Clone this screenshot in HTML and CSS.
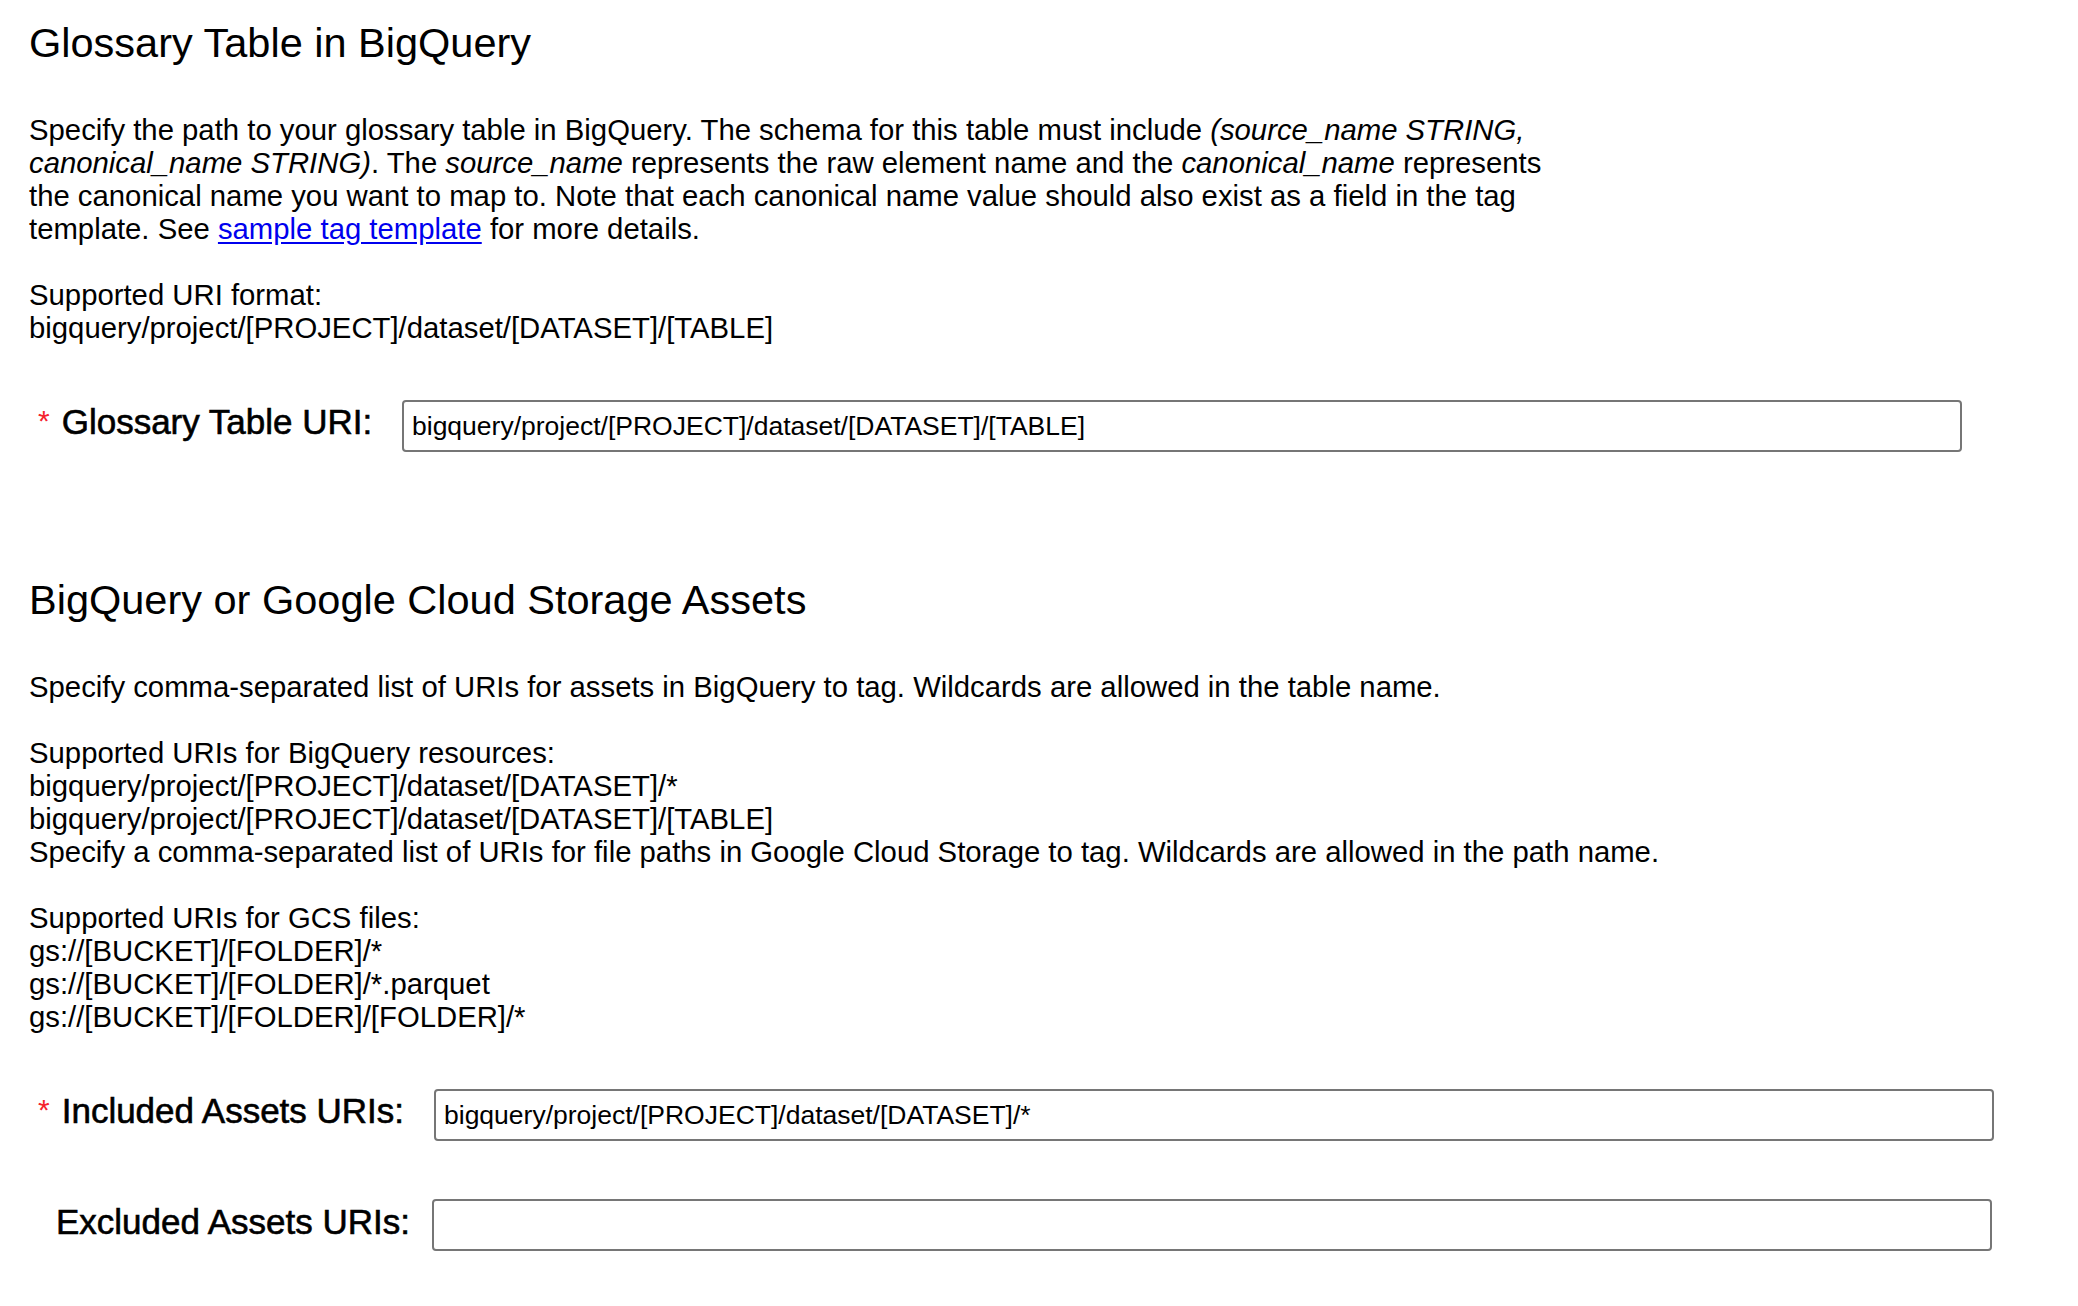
FILE: index.html
```html
<!DOCTYPE html>
<html lang="en">
<head>
<meta charset="utf-8">
<title>Glossary Table in BigQuery</title>
<link rel="stylesheet" href="styles.css">
</head>
<body>
<main class="page">
  <section class="section">
    <h2 class="title">Glossary Table in BigQuery</h2>
    <p class="desc">Specify the path to your glossary table in BigQuery. The schema for this table must include <em>(source_name STRING,</em><br><em>canonical_name STRING)</em>. The <em>source_name</em> represents the raw element name and the <em>canonical_name</em> represents<br>the canonical name you want to map to. Note that each canonical name value should also exist as a field in the tag<br>template. See <a class="link" href="#">sample tag template</a> for more details.<br><br>Supported URI format:<br>bigquery/project/[PROJECT]/dataset/[DATASET]/[TABLE]</p>
    <div class="row row-req">
      <label class="label label-glossary"><span class="req">*</span>Glossary Table URI:</label>
      <input class="field" type="text" value="bigquery/project/[PROJECT]/dataset/[DATASET]/[TABLE]">
    </div>
  </section>

  <section class="section section-assets">
    <h2 class="title">BigQuery or Google Cloud Storage Assets</h2>
    <p class="desc">Specify comma-separated list of URIs for assets in BigQuery to tag. Wildcards are allowed in the table name.<br><br>Supported URIs for BigQuery resources:<br>bigquery/project/[PROJECT]/dataset/[DATASET]/*<br>bigquery/project/[PROJECT]/dataset/[DATASET]/[TABLE]<br>Specify a comma-separated list of URIs for file paths in Google Cloud Storage to tag. Wildcards are allowed in the path name.<br><br>Supported URIs for GCS files:<br>gs://[BUCKET]/[FOLDER]/*<br>gs://[BUCKET]/[FOLDER]/*.parquet<br>gs://[BUCKET]/[FOLDER]/[FOLDER]/*</p>
    <div class="row row-req">
      <label class="label label-included"><span class="req">*</span>Included Assets URIs:</label>
      <input class="field" type="text" value="bigquery/project/[PROJECT]/dataset/[DATASET]/*">
    </div>
    <div class="row row-opt row-next">
      <label class="label label-excluded">Excluded Assets URIs:</label>
      <input class="field" type="text" value="">
    </div>
  </section>
</main>
</body>
</html>
```

FILE: styles.css
```css
html, body {
  margin: 0;
  padding: 0;
  background: #ffffff;
}

body {
  font-family: "Liberation Sans", Arial, Helvetica, sans-serif;
  color: #000000;
}

.page {
  padding: 20px 29px 40px 29px;
}

.section-assets {
  margin-top: 125px;
}

.title {
  margin: 0 0 47px 0;
  font-size: 41.5px;
  line-height: 46px;
  font-weight: normal;
  white-space: nowrap;
}

.desc {
  margin: 0;
  font-size: 29.3px;
  line-height: 33px;
  white-space: nowrap;
}

.desc em {
  font-style: italic;
}

.link {
  color: #0000ee;
  text-decoration: underline;
  text-underline-offset: 3px;
}

.row {
  display: flex;
  align-items: center;
  margin-top: 56px;
  height: 52px;
}

.row-next {
  margin-top: 58px;
}

.row-req {
  padding-left: 9px;
}

.row-opt {
  padding-left: 27px;
}

.label {
  flex: 0 0 auto;
  display: flex;
  align-items: baseline;
  font-size: 35px;
  line-height: 42px;
  font-weight: normal;
  -webkit-text-stroke: 0.6px #000;
  white-space: nowrap;
  position: relative;
  top: -3px;
}

.label-glossary { width: 364px; }
.label-included { width: 396px; }
.label-excluded { width: 376px; }

.req {
  color: #f5222d;
  -webkit-text-stroke: 0;
  font-size: 30px;
  margin-right: 12px;
  position: relative;
  top: -3px;
}

.field {
  box-sizing: border-box;
  flex: 0 0 auto;
  width: 1560px;
  height: 52px;
  margin: 0;
  padding: 0 8px;
  border: 2px solid #767676;
  border-radius: 4px;
  background: #ffffff;
  font-family: "Liberation Sans", Arial, Helvetica, sans-serif;
  font-size: 26.5px;
  color: #000000;
  outline: none;
}
```
